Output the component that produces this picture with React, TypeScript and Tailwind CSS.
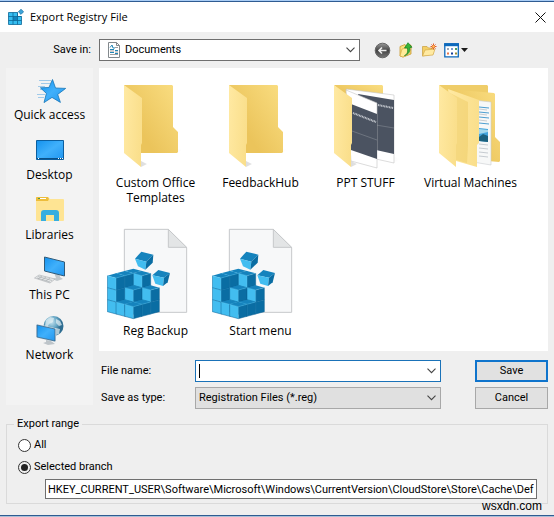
import type { ReactNode } from "react";

type IconProps = { className?: string };

const places = [
  { name: "Quick access", Icon: StarIcon },
  { name: "Desktop", Icon: DesktopIcon },
  { name: "Libraries", Icon: LibrariesIcon },
  { name: "This PC", Icon: ComputerIcon },
  { name: "Network", Icon: NetworkIcon },
];

const files = [
  { name: "Custom Office Templates", Icon: FolderIcon },
  { name: "FeedbackHub", Icon: FolderIcon },
  { name: "PPT STUFF", Icon: SlidesFolderIcon },
  { name: "Virtual Machines", Icon: DocsFolderIcon },
  { name: "Reg Backup", Icon: RegFileIcon },
  { name: "Start menu", Icon: RegFileIcon },
];

function App() {
  return (
    <div className="border-t border-[#a9cdf5] bg-[#efefef] font-['Roboto',sans-serif] text-[11px] leading-4 text-black">
      <header className="flex h-[31px] items-center border-t border-[#2f5c92] bg-white pr-1.5 pl-2">
        <RegistryIcon className="size-4" />
        <h1 className="ml-1.5 grow font-['Open_Sans',sans-serif]">
          Export Registry File
        </h1>
        <button type="button" aria-label="Close" className="p-0.5">
          <svg viewBox="0 0 11 11" className="size-[11px]">
            <path d="M.5.5l10 10M10.500.5l-10 10" stroke="#111" />
          </svg>
        </button>
      </header>

      <main className="relative px-1.5 pb-[11px]">
        <div className="flex h-9 items-center">
          <label htmlFor="folder" className="w-[93px] pr-2 text-right">
            Save in:
          </label>
          <Combo className="w-[261px]">
            <DocumentIcon className="pointer-events-none absolute top-[3px] left-[7px] size-4" />
            <select
              id="folder"
              className="h-[22px] w-full appearance-none border border-[#6f6f6f] bg-white pl-[25px]"
            >
              <option>Documents</option>
            </select>
          </Combo>
          <div className="ml-3.5 flex items-center gap-[7px]">
            <button type="button" aria-label="Back">
              <BackIcon className="size-[17px]" />
            </button>
            <button type="button" aria-label="Up one level">
              <UpIcon className="size-4" />
            </button>
            <button type="button" aria-label="New folder">
              <NewFolderIcon className="size-4" />
            </button>
            <button type="button" aria-label="View" className="flex items-center">
              <ViewIcon className="h-4 w-6" />
            </button>
          </div>
        </div>

        <div className="flex gap-1.5">
          <nav className="mb-1 flex w-[87px] shrink-0 flex-col gap-3 bg-[#f3f3f3] pt-[7px] font-['Open_Sans',sans-serif] text-xs leading-4">
            {places.map(({ name, Icon }) => (
              <button key={name} type="button" className="flex flex-col items-center">
                <Icon className="size-8" />
                {name}
              </button>
            ))}
          </nav>

          <div className="min-w-0 grow">
            <ul className="grid h-[283px] grid-cols-[repeat(auto-fill,105px)] content-start gap-y-5 overflow-hidden bg-white px-1 pt-[9px] font-['Open_Sans',sans-serif] text-xs leading-[15px]">
              {files.map(({ name, Icon }, index) => (
                <li key={index} className="flex flex-col items-center text-center">
                  <Icon className="h-[98px] w-[97px]" />
                  {name}
                </li>
              ))}
            </ul>

            <div className="mt-[9px] grid grid-cols-[96px_246px_1fr_73px] items-center gap-y-[5px]">
              <label htmlFor="name" className="pl-0.5">
                File name:
              </label>
              <Combo>
                <input
                  id="name"
                  className="h-[22px] w-full border border-[#1a72b8] bg-white px-1 outline-none"
                />
                <span className="absolute top-1 left-1 h-3.5 w-px bg-black" />
              </Combo>
              <button
                type="button"
                className="col-start-4 h-[22px] border-2 border-[#0f74cc] bg-[#e1e1e1]"
              >
                Save
              </button>

              <label htmlFor="type" className="pl-0.5">
                Save as type:
              </label>
              <Combo>
                <select
                  id="type"
                  className="h-[22px] w-full appearance-none border border-[#a8a8a8] bg-[#e0e0e0] pl-[3px]"
                >
                  <option>Registration Files (*.reg)</option>
                </select>
              </Combo>
              <button
                type="button"
                className="col-start-4 h-[22px] border border-[#a8a8a8] bg-[#e1e1e1]"
              >
                Cancel
              </button>
            </div>
          </div>
        </div>

        <fieldset className="mt-[7px] border border-[#dadada] pr-2.5 pb-1 pl-[11px]">
          <legend className="-ml-1 px-[3px]">Export range</legend>
          <div className="mt-[5px] flex flex-col gap-1.5">
            <Radio label="All" />
            <Radio label="Selected branch" checked />
          </div>
          <input
            aria-label="Selected branch path"
            defaultValue="HKEY_CURRENT_USER\Software\Microsoft\Windows\CurrentVersion\CloudStore\Store\Cache\Def"
            className="mt-1 ml-[27px] block h-5 w-[calc(100%-27px)] border border-[#6f6f6f] bg-white px-0.5 outline-none"
          />
        </fieldset>
        <span className="absolute right-3 bottom-px font-['Liberation_Sans',sans-serif] text-xs">
          wsxdn.com
        </span>
      </main>
      <div className="h-[3px] border-t border-[#2f5c92] bg-[#a9bfd6]" />
    </div>
  );
}

function Combo({ className = "", children }: { className?: string; children: ReactNode }) {
  return (
    <div className={`relative ${className}`}>
      {children}
      <svg
        viewBox="0 0 9 6"
        className="pointer-events-none absolute top-2 right-[5px] h-1.5 w-[9px]"
      >
        <path d="M.5.7l4 4 4-4" fill="none" stroke="#444" strokeWidth="1.1" />
      </svg>
    </div>
  );
}

function Radio({ label, checked }: { label: string; checked?: boolean }) {
  return (
    <label className="flex h-4 items-center gap-[3px]">
      <input
        type="radio"
        name="range"
        defaultChecked={checked}
        className="size-[13px] appearance-none rounded-full border border-[#333] bg-white checked:bg-[#222] checked:bg-clip-content checked:p-0.5"
      />
      {label}
    </label>
  );
}

function RegistryIcon({ className }: IconProps) {
  return (
    <svg viewBox="0 0 16 16" className={className}>
      <path d="M.5 3.500h9v4h4v8H.5z" fill="#35bdf0" stroke="#0d6898" strokeWidth=".8" />
      <path d="M5 7.500h4.500v4H5z" fill="#1183bd" />
      <path d="M.5 7.500h13M.5 11.500h13M5 3.500v12M9.500 3.500v12" stroke="#0d6898" strokeWidth=".8" />
      <path d="M13 .2l2.600 2.600L13 5.400l-2.600-2.600z" fill="#3ca4da" stroke="#176e9f" strokeWidth=".7" />
    </svg>
  );
}

function DocumentIcon({ className }: IconProps) {
  return (
    <svg viewBox="0 0 16 16" className={className}>
      <path d="M2.500.5h8l3 3v12h-11z" fill="#fff" stroke="#83898d" />
      <path d="M10.500.5v3h3" fill="none" stroke="#83898d" />
      <path d="M4 5.500l2-2.500 1 3h2M4 7.500h4M9 8.500h3M4 10.500h4M9 11.500h3" fill="none" stroke="#2187b8" />
      <path d="M9 5.500h3M4 9h4M9 10h3M4 12.500h8" stroke="#777" strokeWidth=".7" />
    </svg>
  );
}

function BackIcon({ className }: IconProps) {
  return (
    <svg viewBox="0 0 17 17" className={className}>
      <defs>
        <linearGradient id="back" x2="0" y2="1">
          <stop stopColor="#999" />
          <stop offset=".5" stopColor="#444" />
          <stop offset="1" stopColor="#777" />
        </linearGradient>
      </defs>
      <circle cx="8.500" cy="8.500" r="7.300" fill="url(#back)" stroke="#666" />
      <path d="M12.500 8.500H5M8 5.500l-3 3 3 3" fill="none" stroke="#eee" strokeWidth="1.600" />
    </svg>
  );
}

function UpIcon({ className }: IconProps) {
  return (
    <svg viewBox="0 0 16 16" className={className}>
      <path d="M2 4.500l5-2 1 1.500 5-1v9l-8 3-3-1z" fill="#f8df7c" stroke="#c99a31" strokeWidth=".8" />
      <path d="M2 14l2-7 9-2-1 7-7 3z" fill="#ffeb99" stroke="#d1a43c" strokeWidth=".6" />
      <path d="M6.500 13.500c3-1 3.500-4 2.800-7.500H6.500L10 .7 14 5.200l-2.200.4c.5 4-1.300 7-5.300 7.900z" fill="#35b537" stroke="#137b20" strokeWidth=".7" />
    </svg>
  );
}

function NewFolderIcon({ className }: IconProps) {
  return (
    <svg viewBox="0 0 16 16" className={className}>
      <path d="M1.500 14V4.500H6L7.500 6H12v6z" fill="#f3cf65" stroke="#c99d3d" strokeWidth=".7" />
      <path d="M1.500 14L4 8l10-1-2 6z" fill="#ffeaa2" stroke="#d4ab4a" strokeWidth=".7" />
      <path d="M12.500 1.500v6M9.500 4.500h6M10.500 2.500l4 4M14.500 2.500l-4 4" stroke="#e2572b" strokeWidth="1" />
      <circle cx="12.500" cy="4.500" r="1.300" fill="#ffc15a" />
    </svg>
  );
}

function ViewIcon({ className }: IconProps) {
  return (
    <svg viewBox="0 0 24 16" className={className}>
      <path d="M.8 1.800h13.500v13H.8z" fill="#fff" stroke="#0d69bc" strokeWidth="1.300" />
      <path d="M.2 1.200h14.700v3H.2z" fill="#0d69bc" />
      <path d="M3 6h2v2H3z" fill="#9ca7b8" />
      <path d="M7 6h2v2H7z" fill="#7a9bd0" />
      <path d="M11 6h2v2h-2z" fill="#4c9e62" />
      <path d="M3 10.500h2v2H3z" fill="#e9774b" />
      <path d="M7 10.500h2v2H7z" fill="#173f9b" />
      <path d="M11 10.500h2v2h-2z" fill="#998f36" />
      <path d="M17 6h7l-3.500 4z" fill="#1b1b1b" />
    </svg>
  );
}

function ScreenGradient({ id }: { id: string }) {
  return (
    <linearGradient id={id} y2="1">
      <stop stopColor="#1492ee" />
      <stop offset=".5" stopColor="#40b0fb" />
      <stop offset="1" stopColor="#2095ef" />
    </linearGradient>
  );
}

function StarIcon({ className }: IconProps) {
  return (
    <svg viewBox="0 0 32 32" className={className}>
      <defs>
        <ScreenGradient id="star" />
      </defs>
      <path d="M5 5.500h12M7 8.500h9M4 11.500h7M6 14.500h7M3 19.500h8M4 22.500h6" stroke="#7db8e4" strokeWidth=".7" />
      <path
        d="M18.500 4.500l3 8.500 10.200.4-8 6 2.700 8-8.400-5-8 5.200 2.400-9.200-6-5.600 8.500-.3z"
        fill="url(#star)"
        stroke="#1676b8"
        strokeWidth=".8"
      />
    </svg>
  );
}

function DesktopIcon({ className }: IconProps) {
  return (
    <svg viewBox="0 0 32 32" className={className}>
      <defs>
        <ScreenGradient id="desktop" />
      </defs>
      <path d="M2.500 5.500h27v19h-27z" fill="url(#desktop)" stroke="#0b5e9f" />
      <path d="M3 23.500h26" stroke="#0b5086" />
      <path d="M4 23.500h1M24 23.500h1M26 23.500h1M28 23.500h1" stroke="#fff" />
    </svg>
  );
}

function LibrariesIcon({ className }: IconProps) {
  return (
    <svg viewBox="0 0 32 32" className={className}>
      <path d="M2 3q0-1 1-1h11l2 2h13q1 0 1 1v20q0 1-1 1H3q-1 0-1-1z" fill="#fee493" />
      <path d="M2 5V3q0-1 1-1h11l1 2-1 2H2z" fill="#edbd3b" />
      <path d="M4 3.500h8" stroke="#fff" />
      <path d="M4 3.500h2" stroke="#4c9b4c" />
      <path d="M7 26v-8q0-3 3-3h12q3 0 3 3v8h-5v-6h-8v6z" fill="#36aee0" />
    </svg>
  );
}

function ComputerIcon({ className }: IconProps) {
  return (
    <svg viewBox="0 0 32 32" className={className}>
      <defs>
        <ScreenGradient id="pc" />
      </defs>
      <path d="M20 18l2 5-4 1 5 2 6-2-3-2-1-5z" fill="#c2c8cc" />
      <path d="M10.500 2l20 5v14l-20-5z" fill="url(#pc)" stroke="#315b79" />
      <path d="M5 20l16 4-5 4L.5 23z" fill="#e6e8e9" stroke="#b1b5b8" strokeWidth=".7" />
      <path d="M4 21.500l14 4M3 23l13 4M8 21l-4 3M12 22l-4 3M16 23l-4 3" stroke="#a2a7ab" strokeWidth=".6" />
    </svg>
  );
}

function NetworkIcon({ className }: IconProps) {
  return (
    <svg viewBox="0 0 32 32" className={className}>
      <defs>
        <ScreenGradient id="net" />
        <radialGradient id="globe" cx=".4" cy=".3">
          <stop stopColor="#c7e4f0" />
          <stop offset=".6" stopColor="#68a8c6" />
          <stop offset="1" stopColor="#2e6d91" />
        </radialGradient>
      </defs>
      <circle cx="19.500" cy="11" r="10" fill="url(#globe)" />
      <path d="M12 5l4-3 4 1-1 4-4 2-2 4-2-2zM22 4l4 2 2 4-3 1-3-3zM22 13l4 1-1 5-3 1z" fill="#e3f0f3" opacity=".7" />
      <path d="M12 22v5l-3 1 5 2 7-1-4-3v-3z" fill="#bdc4c9" />
      <path d="M3 10l18 4v12L3 22z" fill="url(#net)" stroke="#d8e2e9" strokeWidth="2" />
      <path d="M3 10l18 4v12L3 22z" fill="url(#net)" stroke="#3a6686" strokeWidth=".8" />
    </svg>
  );
}

function FolderGradients() {
  return (
    <defs>
      <linearGradient id="folder-back" y1=".8" y2="0">
        <stop offset=".25" stopColor="#ebc45b" />
        <stop offset="1" stopColor="#fade82" />
      </linearGradient>
      <linearGradient id="folder-flap" x2="1" y2=".2">
        <stop stopColor="#ffe9a2" />
        <stop offset="1" stopColor="#fadf8c" />
      </linearGradient>
      <linearGradient id="folder-shade">
        <stop stopColor="#bbb" stopOpacity=".5" />
        <stop offset="1" stopColor="#ccc" stopOpacity="0" />
      </linearGradient>
    </defs>
  );
}

const FLAP = "M16 8l18 13v45l-1 2v22L16 76z";

function FolderIcon({ className }: IconProps) {
  return (
    <svg viewBox="-1 0 97 98" className={className}>
      <FolderGradients />
      <path d="M33 90l6-3-6-3zM68 76l7-3-6-1z" fill="url(#folder-shade)" />
      <path d="M16 8h48l1 1v41l5 5v20l-1 1H25z" fill="url(#folder-back)" />
      <path d={FLAP} fill="url(#folder-flap)" />
    </svg>
  );
}

function SlidesFolderIcon({ className }: IconProps) {
  return (
    <svg viewBox="-1 0 97 98" className={className}>
      <FolderGradients />
      <path d="M33 90l6-3-6-3zM75 86l8-4-6-2z" fill="url(#folder-shade)" />
      <path d="M16 8h48l1 1v16H30z" fill="url(#folder-back)" />
      <path d="M28 12l48 6v68l-18-4z" fill="#fff" stroke="#c5c5c5" strokeWidth=".6" />
      <path d="M40 17l36 6v54l-18-4z" fill="#4b5361" />
      <path d="M58 48l18 3" stroke="#8e949d" strokeWidth=".5" />
      <path d="M28 13l31 13v65l-26-7z" fill="#fff" stroke="#c5c5c5" strokeWidth=".6" />
      <path d="M33 27l26 10v45l-26-9z" fill="#4b5361" />
      <path d="M34 54l25 9" stroke="#8e949d" strokeWidth=".5" />
      <path d="M35 36l23 9M60 28l15 3" stroke="#c9cdd3" strokeWidth="2" strokeDasharray="1 .6" />
      <path d={FLAP} fill="url(#folder-flap)" />
    </svg>
  );
}

function DocsFolderIcon({ className }: IconProps) {
  return (
    <svg viewBox="-1 0 97 98" className={className}>
      <FolderGradients />
      <path d="M16 8h48l1 1v24H30z" fill="#efcd69" />
      <path d="M25 12l46 4 1 1v43l5 5v19l-1 1-22-2z" fill="url(#folder-back)" />
      <path d="M50 23l18 2v63l-18-3z" fill="#f7f8f8" stroke="#c9ccd0" strokeWidth=".6" />
      <path d="M56 30l10 1M56 35l10 1M56 40l10 1M56 46l10 1" stroke="#4c9ed1" />
      <path d="M56 32l8 1M56 37l8 1M56 43l8 1M56 67l9 1M56 71l9 1M56 75l9 1M56 79l9 1" stroke="#a4adb5" strokeWidth=".6" />
      <path d="M56 51l9 1v13l-9-1z" fill="#43a4dc" />
      <path d="M56 60l4-3 5 2v6l-9-1z" fill="#1c617e" />
      <path d="M56 52l9 1v2l-9 2z" fill="#a6d9ed" />
      <path d="M25 12l31 11v43l-2 2v22l-21-6z" fill="url(#folder-flap)" />
      <path d="M25 15l20 10v43l-1 18-11-3z" fill="#eecb66" opacity=".5" />
      <path d={FLAP} fill="url(#folder-flap)" />
    </svg>
  );
}

// Column height of the block pile at [i][j], counted from its front corner.
const PILE = [
  [1, 1, 3],
  [1, 2, 3],
  [2, 3, 3],
];

function Block({ x, y }: { x: number; y: number }) {
  return (
    <g transform={`translate(${x} ${y})`}>
      <path d="M-26 0L0-7 26 0 0 7z" fill="#1583bd" />
      <path d="M-26 0L0 7v36l-26-7z" fill="#42bdf0" />
      <path d="M26 0L0 7v36l26-7z" fill="#0a6da3" />
      <path d="M-26 36L0 43l26-7M-26 0v36M26 0v36" fill="none" stroke="#0b5f92" strokeWidth="1.500" />
      <path d="M-26 0L0 7l26-7M0 7v36" fill="none" stroke="#6fcdf3" />
    </g>
  );
}

function RegFileIcon({ className }: IconProps) {
  const blocks: ReactNode[] = [];
  for (let depth = 4; depth >= 0; depth--) {
    for (let i = 0; i < 3; i++) {
      const j = depth - i;
      if (j < 0 || j > 2) continue;
      for (let k = 0; k < PILE[i][j]; k++) {
        blocks.push(
          <Block key={`${i}${j}${k}`} x={100 + 26 * (i - j)} y={253 - 7 * depth - 36 * k} />,
        );
      }
    }
  }

  return (
    <svg viewBox="21 15 291 294" className={className}>
      <path d="M73 28h132l55 55v194H73z" fill="#f7f8f9" stroke="#c6c8ca" strokeWidth="3" />
      <path d="M205 28v54h55z" fill="#e3e5e6" stroke="#c6c8ca" strokeWidth="3" />
      {blocks}
      <path d="M105 116l19-21 36 9-21 21z" fill="#1583bd" />
      <path d="M105 116l34 9-3 24-22-10z" fill="#42bdf0" />
      <path d="M139 125l21-21-2 24-22 21z" fill="#0a6da3" />
      <path d="M157 166l18-16 35 9-18 14z" fill="#1583bd" />
      <path d="M157 166l35 7-3 25-23-7z" fill="#42bdf0" />
      <path d="M192 173l18-14-7 28-14 11z" fill="#0a6da3" />
    </svg>
  );
}

export default App;
